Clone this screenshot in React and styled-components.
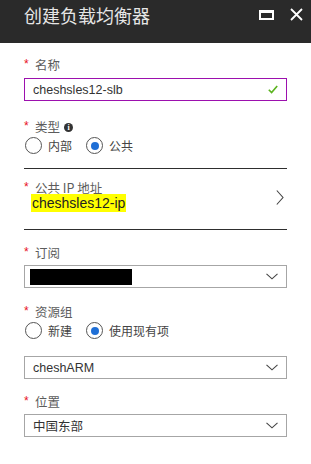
import React from 'react';
import styled, { createGlobalStyle } from 'styled-components';

const GlobalStyle = createGlobalStyle`
  html, body {
    margin: 0;
    padding: 0;
    background: #ffffff;
  }
  body {
    font-family: "Liberation Sans", "Noto Sans CJK SC", sans-serif;
    -webkit-font-smoothing: antialiased;
  }
`;

const Blade = styled.div`
  width: 311px;
  height: 464px;
  background: #ffffff;
  overflow: hidden;
`;

const Header = styled.header`
  height: 43px;
  background: #2a2a2a;
  display: flex;
  align-items: flex-start;
  justify-content: space-between;
  padding: 2px 8px 0 24px;
  box-sizing: border-box;
`;

const Title = styled.h1`
  margin: 0;
  font-family: "Noto Sans CJK SC", sans-serif;
  font-weight: 400;
  font-size: 18px;
  line-height: 26px;
  color: #e6e6e6;
`;

const HeaderIcons = styled.div`
  display: flex;
  align-items: center;
  gap: 16px;
  padding-top: 6px;
`;

const Body = styled.main`
  padding: 14px 24px 0 24px;
  display: flex;
  flex-direction: column;
`;

const Field = styled.div`
  display: flex;
  flex-direction: column;
  margin-top: ${(p) => p.$top || 0}px;
`;

const Label = styled.label`
  display: flex;
  align-items: center;
  font-family: "Noto Sans CJK SC", sans-serif;
  font-size: 12.5px;
  line-height: ${(p) => (p.$compact ? 12 : 16)}px;
  height: ${(p) => (p.$compact ? 12 : 16)}px;
  color: #5c5c5c;
`;

const Star = styled.span`
  color: #e81123;
  font-family: "Liberation Sans", sans-serif;
  font-size: 12px;
  align-self: flex-start;
  line-height: 12px;
  margin-top: ${(p) => (p.$compact ? -1 : 1)}px;
  width: 5px;
  margin-right: 6px;
`;

const Info = styled.span`
  width: 9px;
  height: 9px;
  border-radius: 50%;
  background: #333333;
  color: #ffffff;
  font-family: "Liberation Serif", serif;
  font-weight: 700;
  font-size: 8px;
  line-height: 9px;
  text-align: center;
  margin-left: 4px;
  margin-top: 1px;
`;

const Box = styled.div`
  margin-top: ${(p) => p.$top ?? 4}px;
  height: 23px;
  box-sizing: border-box;
  border: 1px solid ${(p) => (p.$active ? '#9c10ae' : '#a6a6a6')};
  display: flex;
  align-items: center;
  justify-content: space-between;
  padding: 0 8px 0 8px;
  font-family: "Liberation Sans", "Noto Sans CJK SC", sans-serif;
  font-size: 12.5px;
  color: #333333;
`;

const Redacted = styled.span`
  width: 102px;
  height: 16px;
  background: #000000;
  margin-left: -3px;
`;

const RadioRow = styled.div`
  display: flex;
  align-items: center;
  margin-top: 2px;
  height: 17px;
  gap: 13px;
`;

const Option = styled.span`
  display: flex;
  align-items: center;
  gap: 6px;
  font-family: "Noto Sans CJK SC", sans-serif;
  font-size: 12px;
  color: #444444;
`;

const RadioCircle = styled.span`
  width: 17px;
  height: 17px;
  box-sizing: border-box;
  border-radius: 50%;
  border: 1px solid #555555;
  display: flex;
  align-items: center;
  justify-content: center;
  margin-left: 1px;

  &::after {
    content: '';
    width: 8px;
    height: 8px;
    border-radius: 50%;
    background: ${(p) => (p.$checked ? '#1f6fd6' : 'transparent')};
  }
`;

const Divider = styled.hr`
  margin: ${(p) => p.$top}px 0 0 0;
  border: none;
  height: 1px;
  background: #2e2e2e;
`;

const PickerRow = styled.div`
  display: flex;
  align-items: center;
  justify-content: space-between;
  margin-top: 13px;
  padding-right: 3px;
`;

const PickerValue = styled.span`
  display: inline-block;
  align-self: flex-start;
  margin: 0 0 0 7px;
  padding: 0 1px;
  background: #ffff00;
  font-family: "Liberation Sans", sans-serif;
  font-size: 14px;
  line-height: 18px;
  color: #222222;
`;

const Chevron = () => (
  <svg width="12" height="7" viewBox="0 0 12 7">
    <polyline points="0.5,0.8 6,5.8 11.5,0.8" fill="none" stroke="#444" strokeWidth="1.1" />
  </svg>
);

const Radio = ({ label, checked }) => (
  <Option>
    <RadioCircle $checked={checked} />
    {label}
  </Option>
);

const Req = ({ children, info, compact }) => (
  <Label $compact={compact}>
    <Star $compact={compact}>*</Star>
    {children}
    {info && <Info>i</Info>}
  </Label>
);

export default function App() {
  return (
    <Blade>
      <GlobalStyle />
      <Header>
        <Title>创建负载均衡器</Title>
        <HeaderIcons>
          <svg width="15" height="10" viewBox="0 0 15 10">
            <rect x="1" y="1.5" width="13" height="7.5" fill="none" stroke="#fff" strokeWidth="2" />
            <rect x="0" y="0" width="15" height="3" fill="#fff" />
          </svg>
          <svg width="13" height="13" viewBox="0 0 13 13">
            <path d="M1 1 L12 12 M12 1 L1 12" stroke="#fff" strokeWidth="1.8" />
          </svg>
        </HeaderIcons>
      </Header>

      <Body>
        <Field>
          <Req>名称</Req>
          <Box $active $top={5}>
            <span>cheshsles12-slb</span>
            <svg width="10" height="9" viewBox="0 0 10 9">
              <polyline points="0.8,4.8 3.6,7.6 9.2,1" fill="none" stroke="#5ab31e" strokeWidth="1.6" />
            </svg>
          </Box>
        </Field>

        <Field $top={18}>
          <Req info>类型</Req>
          <RadioRow>
            <Radio label="内部" />
            <Radio label="公共" checked />
          </RadioRow>
        </Field>

        <Divider $top={14} />

        <PickerRow>
          <Field>
            <Req compact>公共 IP 地址</Req>
            <PickerValue>cheshsles12-ip</PickerValue>
          </Field>
          <svg width="8" height="15" viewBox="0 0 8 15">
            <polyline points="0.8,0.5 7,7.5 0.8,14.5" fill="none" stroke="#444" strokeWidth="1.1" />
          </svg>
        </PickerRow>

        <Divider $top={17} />

        <Field $top={15}>
          <Req>订阅</Req>
          <Box>
            <Redacted />
            <Chevron />
          </Box>
        </Field>

        <Field $top={16}>
          <Req>资源组</Req>
          <RadioRow>
            <Radio label="新建" />
            <Radio label="使用现有项" checked />
          </RadioRow>
          <Box $top={17}>
            <span>cheshARM</span>
            <Chevron />
          </Box>
        </Field>

        <Field $top={15}>
          <Req>位置</Req>
          <Box>
            <span>中国东部</span>
            <Chevron />
          </Box>
        </Field>
      </Body>
    </Blade>
  );
}
